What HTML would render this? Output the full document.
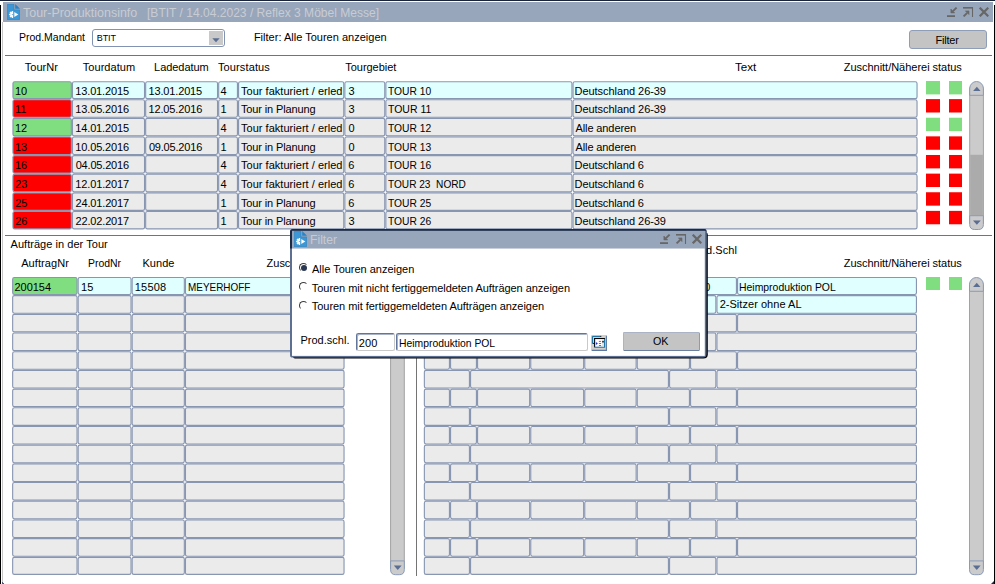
<!DOCTYPE html>
<html lang="de">
<head>
<meta charset="utf-8">
<title>Tour-Produktionsinfo</title>
<style>
html,body{margin:0;padding:0;}
body{width:995px;height:584px;overflow:hidden;background:#fff;position:relative;font-family:"Liberation Sans",Arial,sans-serif;font-size:11px;color:#000;}
.t{position:absolute;white-space:nowrap;display:block;transform-origin:0 0;}
.ic{position:absolute;display:block;}
#win{position:absolute;left:0;top:0;width:995px;height:584px;overflow:hidden;}
#frame-top{position:absolute;left:0;top:0;width:995px;height:1px;background:#18233a;}
#frame-left{position:absolute;left:0;top:5px;width:1px;height:579px;background:#000;}
#frame-left2{position:absolute;left:2px;top:22px;width:1px;height:562px;background:#c6c6c6;}
#frame-right{position:absolute;left:994px;top:5px;width:1px;height:579px;background:#000;}
#frame-br{position:absolute;left:991px;top:581px;width:3px;height:3px;background:linear-gradient(135deg,rgba(0,0,0,0) 45%,#1b2a45 55%);}
#frame-bl{position:absolute;left:2px;top:581px;width:3px;height:3px;background:linear-gradient(225deg,rgba(0,0,0,0) 50%,#4a5a78 60%);}
#titlebar{position:absolute;left:3px;top:2px;width:990px;height:19.5px;background:#98a6bb;}
#grid{position:absolute;left:0;top:0;}

.combo{position:absolute;left:92px;top:29px;width:132.5px;height:17.5px;box-sizing:border-box;border:1px solid #8293b2;border-radius:3px;background:#fff;}
.combo .btn{position:absolute;right:1px;top:0.7px;width:13.2px;height:14.2px;background:#c9c9c9;}
.pbtn{position:absolute;box-sizing:border-box;background:#c4c4c4;border:1px solid #8e9db8;border-radius:3px;}
#dlg{position:absolute;left:290.0px;top:229.0px;width:717.8px;height:129.6px;}
#dlg{width:417.8px;}
#dlg .body{position:absolute;left:0;top:0;right:1.2px;bottom:1.2px;background:#fff;box-sizing:border-box;border:2px solid #5d7092;border-top:1.6px solid #1b2a45;border-radius:3px 3px 4px 3px;}
#dlg .shadow{position:absolute;left:2px;top:3px;right:0;bottom:0;background:#000;border-radius:0 3px 5px 3px;}
#dlg .tb{position:absolute;left:2px;top:1.6px;right:3.2px;height:17.8px;background:#98a6bb;}
#dlg .tbl{position:absolute;left:0;top:1px;width:2px;height:18.4px;background:#1b2a45;}
.lookup{position:absolute;width:16px;height:16px;}
.inp{position:absolute;box-sizing:border-box;border:1px solid #c9c9c9;border-top:1.5px solid #62759a;border-left:1.5px solid #62759a;border-radius:2.5px;background:#fff;box-shadow:inset 1px 1px 0 rgba(98,117,154,0.55);}
.radio{position:absolute;width:9px;height:9px;border-radius:50%;box-sizing:border-box;border:1.2px solid transparent;border-top-color:#3c3c3c;border-left-color:#3c3c3c;transform:rotate(0deg);}
.radio.on:after{content:"";position:absolute;left:1px;top:1.1px;width:6.2px;height:6.2px;border-radius:50%;background:#2a3853;}
</style>
</head>
<body>
<div id="win">
<svg id="grid" width="995" height="584" viewBox="0 0 995 584">
<g stroke="#8896b2" stroke-width="1.12"><rect x="12.96" y="81.76" width="58.38" height="16.88" rx="1.7" fill="#80de80"/><rect x="72.46" y="81.76" width="72.08" height="16.88" rx="1.7" fill="#e0ffff"/><rect x="145.66" y="81.76" width="71.88" height="16.88" rx="1.7" fill="#e0ffff"/><rect x="218.66" y="81.76" width="18.78" height="16.88" rx="1.7" fill="#e0ffff"/><rect x="238.56" y="81.76" width="105.18" height="16.88" rx="1.7" fill="#e0ffff"/><rect x="344.86" y="81.76" width="39.88" height="16.88" rx="1.7" fill="#e0ffff"/><rect x="385.86" y="81.76" width="186.08" height="16.88" rx="1.7" fill="#e0ffff"/><rect x="573.06" y="81.76" width="343.98" height="16.88" rx="1.7" fill="#e0ffff"/><rect x="12.96" y="99.76" width="58.38" height="17.51" rx="1.7" fill="#ff0000"/><rect x="72.46" y="99.76" width="72.08" height="17.51" rx="1.7" fill="#ebebeb"/><rect x="145.66" y="99.76" width="71.88" height="17.51" rx="1.7" fill="#ebebeb"/><rect x="218.66" y="99.76" width="18.78" height="17.51" rx="1.7" fill="#ebebeb"/><rect x="238.56" y="99.76" width="105.18" height="17.51" rx="1.7" fill="#ebebeb"/><rect x="344.86" y="99.76" width="39.88" height="17.51" rx="1.7" fill="#ebebeb"/><rect x="385.86" y="99.76" width="186.08" height="17.51" rx="1.7" fill="#ebebeb"/><rect x="573.06" y="99.76" width="343.98" height="17.51" rx="1.7" fill="#ebebeb"/><rect x="12.96" y="118.39" width="58.38" height="17.51" rx="1.7" fill="#80de80"/><rect x="72.46" y="118.39" width="72.08" height="17.51" rx="1.7" fill="#ebebeb"/><rect x="145.66" y="118.39" width="71.88" height="17.51" rx="1.7" fill="#ebebeb"/><rect x="218.66" y="118.39" width="18.78" height="17.51" rx="1.7" fill="#ebebeb"/><rect x="238.56" y="118.39" width="105.18" height="17.51" rx="1.7" fill="#ebebeb"/><rect x="344.86" y="118.39" width="39.88" height="17.51" rx="1.7" fill="#ebebeb"/><rect x="385.86" y="118.39" width="186.08" height="17.51" rx="1.7" fill="#ebebeb"/><rect x="573.06" y="118.39" width="343.98" height="17.51" rx="1.7" fill="#ebebeb"/><rect x="12.96" y="137.02" width="58.38" height="17.51" rx="1.7" fill="#ff0000"/><rect x="72.46" y="137.02" width="72.08" height="17.51" rx="1.7" fill="#ebebeb"/><rect x="145.66" y="137.02" width="71.88" height="17.51" rx="1.7" fill="#ebebeb"/><rect x="218.66" y="137.02" width="18.78" height="17.51" rx="1.7" fill="#ebebeb"/><rect x="238.56" y="137.02" width="105.18" height="17.51" rx="1.7" fill="#ebebeb"/><rect x="344.86" y="137.02" width="39.88" height="17.51" rx="1.7" fill="#ebebeb"/><rect x="385.86" y="137.02" width="186.08" height="17.51" rx="1.7" fill="#ebebeb"/><rect x="573.06" y="137.02" width="343.98" height="17.51" rx="1.7" fill="#ebebeb"/><rect x="12.96" y="155.65" width="58.38" height="17.51" rx="1.7" fill="#ff0000"/><rect x="72.46" y="155.65" width="72.08" height="17.51" rx="1.7" fill="#ebebeb"/><rect x="145.66" y="155.65" width="71.88" height="17.51" rx="1.7" fill="#ebebeb"/><rect x="218.66" y="155.65" width="18.78" height="17.51" rx="1.7" fill="#ebebeb"/><rect x="238.56" y="155.65" width="105.18" height="17.51" rx="1.7" fill="#ebebeb"/><rect x="344.86" y="155.65" width="39.88" height="17.51" rx="1.7" fill="#ebebeb"/><rect x="385.86" y="155.65" width="186.08" height="17.51" rx="1.7" fill="#ebebeb"/><rect x="573.06" y="155.65" width="343.98" height="17.51" rx="1.7" fill="#ebebeb"/><rect x="12.96" y="174.28" width="58.38" height="17.51" rx="1.7" fill="#ff0000"/><rect x="72.46" y="174.28" width="72.08" height="17.51" rx="1.7" fill="#ebebeb"/><rect x="145.66" y="174.28" width="71.88" height="17.51" rx="1.7" fill="#ebebeb"/><rect x="218.66" y="174.28" width="18.78" height="17.51" rx="1.7" fill="#ebebeb"/><rect x="238.56" y="174.28" width="105.18" height="17.51" rx="1.7" fill="#ebebeb"/><rect x="344.86" y="174.28" width="39.88" height="17.51" rx="1.7" fill="#ebebeb"/><rect x="385.86" y="174.28" width="186.08" height="17.51" rx="1.7" fill="#ebebeb"/><rect x="573.06" y="174.28" width="343.98" height="17.51" rx="1.7" fill="#ebebeb"/><rect x="12.96" y="192.91" width="58.38" height="17.51" rx="1.7" fill="#ff0000"/><rect x="72.46" y="192.91" width="72.08" height="17.51" rx="1.7" fill="#ebebeb"/><rect x="145.66" y="192.91" width="71.88" height="17.51" rx="1.7" fill="#ebebeb"/><rect x="218.66" y="192.91" width="18.78" height="17.51" rx="1.7" fill="#ebebeb"/><rect x="238.56" y="192.91" width="105.18" height="17.51" rx="1.7" fill="#ebebeb"/><rect x="344.86" y="192.91" width="39.88" height="17.51" rx="1.7" fill="#ebebeb"/><rect x="385.86" y="192.91" width="186.08" height="17.51" rx="1.7" fill="#ebebeb"/><rect x="573.06" y="192.91" width="343.98" height="17.51" rx="1.7" fill="#ebebeb"/><rect x="12.96" y="211.54" width="58.38" height="17.35" rx="1.7" fill="#ff0000"/><rect x="72.46" y="211.54" width="72.08" height="17.35" rx="1.7" fill="#ebebeb"/><rect x="145.66" y="211.54" width="71.88" height="17.35" rx="1.7" fill="#ebebeb"/><rect x="218.66" y="211.54" width="18.78" height="17.35" rx="1.7" fill="#ebebeb"/><rect x="238.56" y="211.54" width="105.18" height="17.35" rx="1.7" fill="#ebebeb"/><rect x="344.86" y="211.54" width="39.88" height="17.35" rx="1.7" fill="#ebebeb"/><rect x="385.86" y="211.54" width="186.08" height="17.35" rx="1.7" fill="#ebebeb"/><rect x="573.06" y="211.54" width="343.98" height="17.35" rx="1.7" fill="#ebebeb"/></g>
<g stroke="#8896b2" stroke-width="1.12"><rect x="12.66" y="277.46" width="64.38" height="17.08" rx="1.7" fill="#80de80"/><rect x="78.16" y="277.46" width="52.88" height="17.08" rx="1.7" fill="#e0ffff"/><rect x="132.16" y="277.46" width="52.18" height="17.08" rx="1.7" fill="#e0ffff"/><rect x="185.46" y="277.46" width="158.58" height="17.08" rx="1.7" fill="#e0ffff"/><rect x="12.66" y="295.66" width="64.38" height="17.57" rx="1.7" fill="#ebebeb"/><rect x="78.16" y="295.66" width="52.88" height="17.57" rx="1.7" fill="#ebebeb"/><rect x="132.16" y="295.66" width="52.18" height="17.57" rx="1.7" fill="#ebebeb"/><rect x="185.46" y="295.66" width="158.58" height="17.57" rx="1.7" fill="#ebebeb"/><rect x="12.66" y="314.35" width="64.38" height="17.57" rx="1.7" fill="#ebebeb"/><rect x="78.16" y="314.35" width="52.88" height="17.57" rx="1.7" fill="#ebebeb"/><rect x="132.16" y="314.35" width="52.18" height="17.57" rx="1.7" fill="#ebebeb"/><rect x="185.46" y="314.35" width="158.58" height="17.57" rx="1.7" fill="#ebebeb"/><rect x="12.66" y="333.04" width="64.38" height="17.57" rx="1.7" fill="#ebebeb"/><rect x="78.16" y="333.04" width="52.88" height="17.57" rx="1.7" fill="#ebebeb"/><rect x="132.16" y="333.04" width="52.18" height="17.57" rx="1.7" fill="#ebebeb"/><rect x="185.46" y="333.04" width="158.58" height="17.57" rx="1.7" fill="#ebebeb"/><rect x="12.66" y="351.73" width="64.38" height="17.57" rx="1.7" fill="#ebebeb"/><rect x="78.16" y="351.73" width="52.88" height="17.57" rx="1.7" fill="#ebebeb"/><rect x="132.16" y="351.73" width="52.18" height="17.57" rx="1.7" fill="#ebebeb"/><rect x="185.46" y="351.73" width="158.58" height="17.57" rx="1.7" fill="#ebebeb"/><rect x="12.66" y="370.42" width="64.38" height="17.57" rx="1.7" fill="#ebebeb"/><rect x="78.16" y="370.42" width="52.88" height="17.57" rx="1.7" fill="#ebebeb"/><rect x="132.16" y="370.42" width="52.18" height="17.57" rx="1.7" fill="#ebebeb"/><rect x="185.46" y="370.42" width="158.58" height="17.57" rx="1.7" fill="#ebebeb"/><rect x="12.66" y="389.11" width="64.38" height="17.57" rx="1.7" fill="#ebebeb"/><rect x="78.16" y="389.11" width="52.88" height="17.57" rx="1.7" fill="#ebebeb"/><rect x="132.16" y="389.11" width="52.18" height="17.57" rx="1.7" fill="#ebebeb"/><rect x="185.46" y="389.11" width="158.58" height="17.57" rx="1.7" fill="#ebebeb"/><rect x="12.66" y="407.80" width="64.38" height="17.57" rx="1.7" fill="#ebebeb"/><rect x="78.16" y="407.80" width="52.88" height="17.57" rx="1.7" fill="#ebebeb"/><rect x="132.16" y="407.80" width="52.18" height="17.57" rx="1.7" fill="#ebebeb"/><rect x="185.46" y="407.80" width="158.58" height="17.57" rx="1.7" fill="#ebebeb"/><rect x="12.66" y="426.49" width="64.38" height="17.57" rx="1.7" fill="#ebebeb"/><rect x="78.16" y="426.49" width="52.88" height="17.57" rx="1.7" fill="#ebebeb"/><rect x="132.16" y="426.49" width="52.18" height="17.57" rx="1.7" fill="#ebebeb"/><rect x="185.46" y="426.49" width="158.58" height="17.57" rx="1.7" fill="#ebebeb"/><rect x="12.66" y="445.18" width="64.38" height="17.57" rx="1.7" fill="#ebebeb"/><rect x="78.16" y="445.18" width="52.88" height="17.57" rx="1.7" fill="#ebebeb"/><rect x="132.16" y="445.18" width="52.18" height="17.57" rx="1.7" fill="#ebebeb"/><rect x="185.46" y="445.18" width="158.58" height="17.57" rx="1.7" fill="#ebebeb"/><rect x="12.66" y="463.87" width="64.38" height="17.57" rx="1.7" fill="#ebebeb"/><rect x="78.16" y="463.87" width="52.88" height="17.57" rx="1.7" fill="#ebebeb"/><rect x="132.16" y="463.87" width="52.18" height="17.57" rx="1.7" fill="#ebebeb"/><rect x="185.46" y="463.87" width="158.58" height="17.57" rx="1.7" fill="#ebebeb"/><rect x="12.66" y="482.56" width="64.38" height="17.57" rx="1.7" fill="#ebebeb"/><rect x="78.16" y="482.56" width="52.88" height="17.57" rx="1.7" fill="#ebebeb"/><rect x="132.16" y="482.56" width="52.18" height="17.57" rx="1.7" fill="#ebebeb"/><rect x="185.46" y="482.56" width="158.58" height="17.57" rx="1.7" fill="#ebebeb"/><rect x="12.66" y="501.25" width="64.38" height="17.57" rx="1.7" fill="#ebebeb"/><rect x="78.16" y="501.25" width="52.88" height="17.57" rx="1.7" fill="#ebebeb"/><rect x="132.16" y="501.25" width="52.18" height="17.57" rx="1.7" fill="#ebebeb"/><rect x="185.46" y="501.25" width="158.58" height="17.57" rx="1.7" fill="#ebebeb"/><rect x="12.66" y="519.94" width="64.38" height="17.57" rx="1.7" fill="#ebebeb"/><rect x="78.16" y="519.94" width="52.88" height="17.57" rx="1.7" fill="#ebebeb"/><rect x="132.16" y="519.94" width="52.18" height="17.57" rx="1.7" fill="#ebebeb"/><rect x="185.46" y="519.94" width="158.58" height="17.57" rx="1.7" fill="#ebebeb"/><rect x="12.66" y="538.63" width="64.38" height="17.57" rx="1.7" fill="#ebebeb"/><rect x="78.16" y="538.63" width="52.88" height="17.57" rx="1.7" fill="#ebebeb"/><rect x="132.16" y="538.63" width="52.18" height="17.57" rx="1.7" fill="#ebebeb"/><rect x="185.46" y="538.63" width="158.58" height="17.57" rx="1.7" fill="#ebebeb"/><rect x="12.66" y="557.32" width="64.38" height="17.02" rx="1.7" fill="#ebebeb"/><rect x="78.16" y="557.32" width="52.88" height="17.02" rx="1.7" fill="#ebebeb"/><rect x="132.16" y="557.32" width="52.18" height="17.02" rx="1.7" fill="#ebebeb"/><rect x="185.46" y="557.32" width="158.58" height="17.02" rx="1.7" fill="#ebebeb"/></g>
<g stroke="#8896b2" stroke-width="1.12"><rect x="424.36" y="277.46" width="25.08" height="17.08" rx="1.7" fill="#e0ffff"/><rect x="450.56" y="277.46" width="25.88" height="17.08" rx="1.7" fill="#e0ffff"/><rect x="477.56" y="277.46" width="52.08" height="17.08" rx="1.7" fill="#e0ffff"/><rect x="530.76" y="277.46" width="52.88" height="17.08" rx="1.7" fill="#e0ffff"/><rect x="584.76" y="277.46" width="51.38" height="17.08" rx="1.7" fill="#e0ffff"/><rect x="637.26" y="277.46" width="52.18" height="17.08" rx="1.7" fill="#e0ffff"/><rect x="690.56" y="277.46" width="45.88" height="17.08" rx="1.7" fill="#e0ffff"/><rect x="737.56" y="277.46" width="178.88" height="17.08" rx="1.7" fill="#e0ffff"/><rect x="424.36" y="295.66" width="45.08" height="17.57" rx="1.7" fill="#e0ffff"/><rect x="470.56" y="295.66" width="197.88" height="17.57" rx="1.7" fill="#e0ffff"/><rect x="669.56" y="295.66" width="46.28" height="17.57" rx="1.7" fill="#e0ffff"/><rect x="716.96" y="295.66" width="199.48" height="17.57" rx="1.7" fill="#e0ffff"/><rect x="424.36" y="314.35" width="25.08" height="17.57" rx="1.7" fill="#ebebeb"/><rect x="450.56" y="314.35" width="25.88" height="17.57" rx="1.7" fill="#ebebeb"/><rect x="477.56" y="314.35" width="52.08" height="17.57" rx="1.7" fill="#ebebeb"/><rect x="530.76" y="314.35" width="52.88" height="17.57" rx="1.7" fill="#ebebeb"/><rect x="584.76" y="314.35" width="51.38" height="17.57" rx="1.7" fill="#ebebeb"/><rect x="637.26" y="314.35" width="52.18" height="17.57" rx="1.7" fill="#ebebeb"/><rect x="690.56" y="314.35" width="45.88" height="17.57" rx="1.7" fill="#ebebeb"/><rect x="737.56" y="314.35" width="178.88" height="17.57" rx="1.7" fill="#ebebeb"/><rect x="424.36" y="333.04" width="45.08" height="17.57" rx="1.7" fill="#ebebeb"/><rect x="470.56" y="333.04" width="197.88" height="17.57" rx="1.7" fill="#ebebeb"/><rect x="669.56" y="333.04" width="46.28" height="17.57" rx="1.7" fill="#ebebeb"/><rect x="716.96" y="333.04" width="199.48" height="17.57" rx="1.7" fill="#ebebeb"/><rect x="424.36" y="351.73" width="25.08" height="17.57" rx="1.7" fill="#ebebeb"/><rect x="450.56" y="351.73" width="25.88" height="17.57" rx="1.7" fill="#ebebeb"/><rect x="477.56" y="351.73" width="52.08" height="17.57" rx="1.7" fill="#ebebeb"/><rect x="530.76" y="351.73" width="52.88" height="17.57" rx="1.7" fill="#ebebeb"/><rect x="584.76" y="351.73" width="51.38" height="17.57" rx="1.7" fill="#ebebeb"/><rect x="637.26" y="351.73" width="52.18" height="17.57" rx="1.7" fill="#ebebeb"/><rect x="690.56" y="351.73" width="45.88" height="17.57" rx="1.7" fill="#ebebeb"/><rect x="737.56" y="351.73" width="178.88" height="17.57" rx="1.7" fill="#ebebeb"/><rect x="424.36" y="370.42" width="45.08" height="17.57" rx="1.7" fill="#ebebeb"/><rect x="470.56" y="370.42" width="197.88" height="17.57" rx="1.7" fill="#ebebeb"/><rect x="669.56" y="370.42" width="46.28" height="17.57" rx="1.7" fill="#ebebeb"/><rect x="716.96" y="370.42" width="199.48" height="17.57" rx="1.7" fill="#ebebeb"/><rect x="424.36" y="389.11" width="25.08" height="17.57" rx="1.7" fill="#ebebeb"/><rect x="450.56" y="389.11" width="25.88" height="17.57" rx="1.7" fill="#ebebeb"/><rect x="477.56" y="389.11" width="52.08" height="17.57" rx="1.7" fill="#ebebeb"/><rect x="530.76" y="389.11" width="52.88" height="17.57" rx="1.7" fill="#ebebeb"/><rect x="584.76" y="389.11" width="51.38" height="17.57" rx="1.7" fill="#ebebeb"/><rect x="637.26" y="389.11" width="52.18" height="17.57" rx="1.7" fill="#ebebeb"/><rect x="690.56" y="389.11" width="45.88" height="17.57" rx="1.7" fill="#ebebeb"/><rect x="737.56" y="389.11" width="178.88" height="17.57" rx="1.7" fill="#ebebeb"/><rect x="424.36" y="407.80" width="45.08" height="17.57" rx="1.7" fill="#ebebeb"/><rect x="470.56" y="407.80" width="197.88" height="17.57" rx="1.7" fill="#ebebeb"/><rect x="669.56" y="407.80" width="46.28" height="17.57" rx="1.7" fill="#ebebeb"/><rect x="716.96" y="407.80" width="199.48" height="17.57" rx="1.7" fill="#ebebeb"/><rect x="424.36" y="426.49" width="25.08" height="17.57" rx="1.7" fill="#ebebeb"/><rect x="450.56" y="426.49" width="25.88" height="17.57" rx="1.7" fill="#ebebeb"/><rect x="477.56" y="426.49" width="52.08" height="17.57" rx="1.7" fill="#ebebeb"/><rect x="530.76" y="426.49" width="52.88" height="17.57" rx="1.7" fill="#ebebeb"/><rect x="584.76" y="426.49" width="51.38" height="17.57" rx="1.7" fill="#ebebeb"/><rect x="637.26" y="426.49" width="52.18" height="17.57" rx="1.7" fill="#ebebeb"/><rect x="690.56" y="426.49" width="45.88" height="17.57" rx="1.7" fill="#ebebeb"/><rect x="737.56" y="426.49" width="178.88" height="17.57" rx="1.7" fill="#ebebeb"/><rect x="424.36" y="445.18" width="45.08" height="17.57" rx="1.7" fill="#ebebeb"/><rect x="470.56" y="445.18" width="197.88" height="17.57" rx="1.7" fill="#ebebeb"/><rect x="669.56" y="445.18" width="46.28" height="17.57" rx="1.7" fill="#ebebeb"/><rect x="716.96" y="445.18" width="199.48" height="17.57" rx="1.7" fill="#ebebeb"/><rect x="424.36" y="463.87" width="25.08" height="17.57" rx="1.7" fill="#ebebeb"/><rect x="450.56" y="463.87" width="25.88" height="17.57" rx="1.7" fill="#ebebeb"/><rect x="477.56" y="463.87" width="52.08" height="17.57" rx="1.7" fill="#ebebeb"/><rect x="530.76" y="463.87" width="52.88" height="17.57" rx="1.7" fill="#ebebeb"/><rect x="584.76" y="463.87" width="51.38" height="17.57" rx="1.7" fill="#ebebeb"/><rect x="637.26" y="463.87" width="52.18" height="17.57" rx="1.7" fill="#ebebeb"/><rect x="690.56" y="463.87" width="45.88" height="17.57" rx="1.7" fill="#ebebeb"/><rect x="737.56" y="463.87" width="178.88" height="17.57" rx="1.7" fill="#ebebeb"/><rect x="424.36" y="482.56" width="45.08" height="17.57" rx="1.7" fill="#ebebeb"/><rect x="470.56" y="482.56" width="197.88" height="17.57" rx="1.7" fill="#ebebeb"/><rect x="669.56" y="482.56" width="46.28" height="17.57" rx="1.7" fill="#ebebeb"/><rect x="716.96" y="482.56" width="199.48" height="17.57" rx="1.7" fill="#ebebeb"/><rect x="424.36" y="501.25" width="25.08" height="17.57" rx="1.7" fill="#ebebeb"/><rect x="450.56" y="501.25" width="25.88" height="17.57" rx="1.7" fill="#ebebeb"/><rect x="477.56" y="501.25" width="52.08" height="17.57" rx="1.7" fill="#ebebeb"/><rect x="530.76" y="501.25" width="52.88" height="17.57" rx="1.7" fill="#ebebeb"/><rect x="584.76" y="501.25" width="51.38" height="17.57" rx="1.7" fill="#ebebeb"/><rect x="637.26" y="501.25" width="52.18" height="17.57" rx="1.7" fill="#ebebeb"/><rect x="690.56" y="501.25" width="45.88" height="17.57" rx="1.7" fill="#ebebeb"/><rect x="737.56" y="501.25" width="178.88" height="17.57" rx="1.7" fill="#ebebeb"/><rect x="424.36" y="519.94" width="45.08" height="17.57" rx="1.7" fill="#ebebeb"/><rect x="470.56" y="519.94" width="197.88" height="17.57" rx="1.7" fill="#ebebeb"/><rect x="669.56" y="519.94" width="46.28" height="17.57" rx="1.7" fill="#ebebeb"/><rect x="716.96" y="519.94" width="199.48" height="17.57" rx="1.7" fill="#ebebeb"/><rect x="424.36" y="538.63" width="25.08" height="17.57" rx="1.7" fill="#ebebeb"/><rect x="450.56" y="538.63" width="25.88" height="17.57" rx="1.7" fill="#ebebeb"/><rect x="477.56" y="538.63" width="52.08" height="17.57" rx="1.7" fill="#ebebeb"/><rect x="530.76" y="538.63" width="52.88" height="17.57" rx="1.7" fill="#ebebeb"/><rect x="584.76" y="538.63" width="51.38" height="17.57" rx="1.7" fill="#ebebeb"/><rect x="637.26" y="538.63" width="52.18" height="17.57" rx="1.7" fill="#ebebeb"/><rect x="690.56" y="538.63" width="45.88" height="17.57" rx="1.7" fill="#ebebeb"/><rect x="737.56" y="538.63" width="178.88" height="17.57" rx="1.7" fill="#ebebeb"/><rect x="424.36" y="557.32" width="45.08" height="17.02" rx="1.7" fill="#ebebeb"/><rect x="470.56" y="557.32" width="197.88" height="17.02" rx="1.7" fill="#ebebeb"/><rect x="669.56" y="557.32" width="46.28" height="17.02" rx="1.7" fill="#ebebeb"/><rect x="716.96" y="557.32" width="199.48" height="17.02" rx="1.7" fill="#ebebeb"/></g>
<rect x="926.00" y="81.00" width="14" height="13.4" fill="#80de80" stroke="none"/>
<rect x="949.00" y="81.00" width="13" height="13.4" fill="#80de80" stroke="none"/>
<rect x="926.00" y="99.10" width="14" height="13.4" fill="#ff0000" stroke="none"/>
<rect x="949.00" y="99.10" width="13" height="13.4" fill="#ff0000" stroke="none"/>
<rect x="926.00" y="117.73" width="14" height="13.4" fill="#80de80" stroke="none"/>
<rect x="949.00" y="117.73" width="13" height="13.4" fill="#80de80" stroke="none"/>
<rect x="926.00" y="136.36" width="14" height="13.4" fill="#ff0000" stroke="none"/>
<rect x="949.00" y="136.36" width="13" height="13.4" fill="#ff0000" stroke="none"/>
<rect x="926.00" y="154.99" width="14" height="13.4" fill="#ff0000" stroke="none"/>
<rect x="949.00" y="154.99" width="13" height="13.4" fill="#ff0000" stroke="none"/>
<rect x="926.00" y="173.62" width="14" height="13.4" fill="#ff0000" stroke="none"/>
<rect x="949.00" y="173.62" width="13" height="13.4" fill="#ff0000" stroke="none"/>
<rect x="926.00" y="192.25" width="14" height="13.4" fill="#ff0000" stroke="none"/>
<rect x="949.00" y="192.25" width="13" height="13.4" fill="#ff0000" stroke="none"/>
<rect x="926.00" y="210.88" width="14" height="13.4" fill="#ff0000" stroke="none"/>
<rect x="949.00" y="210.88" width="13" height="13.4" fill="#ff0000" stroke="none"/>
<rect x="926.00" y="277.00" width="14" height="13" fill="#80de80" stroke="none"/>
<rect x="949.00" y="277.00" width="13" height="13" fill="#80de80" stroke="none"/>
<rect x="353.50" y="277.00" width="14" height="13" fill="#80de80" stroke="none"/>
<rect x="376.50" y="277.00" width="13" height="13" fill="#80de80" stroke="none"/>
<rect x="969.70" y="88.00" width="13.70" height="135.00" fill="#cbcbcb" stroke="#a2a2a2" stroke-width="1"/>
<rect x="970.20" y="154.80" width="12.70" height="60.90" fill="#ababab" stroke="none"/>
<path d="M969.70 95.30 V88.50 A6.85 7 0 0 1 983.40 88.50 V95.30 Z" fill="#cbcbcb" stroke="#8a9bb7" stroke-width="1"/>
<path d="M973.15 91.10 L976.85 86.70 L980.55 91.10 Z" fill="#5a6d92" stroke="none"/>
<path d="M969.70 215.70 V224.50 Q969.70 229.50 974.70 229.50 H978.40 Q983.40 229.50 983.40 224.50 V215.70 Z" fill="#cbcbcb" stroke="#8a9bb7" stroke-width="1"/>
<path d="M972.95 220.40 L976.85 224.70 L980.75 220.40 Z" fill="#5a6d92" stroke="none"/>
<rect x="969.50" y="284.00" width="13.90" height="284.20" fill="#cbcbcb" stroke="#a2a2a2" stroke-width="1"/>
<path d="M969.50 291.30 V284.50 A6.95 7 0 0 1 983.40 284.50 V291.30 Z" fill="#cbcbcb" stroke="#8a9bb7" stroke-width="1"/>
<path d="M973.05 287.10 L976.75 282.70 L980.45 287.10 Z" fill="#5a6d92" stroke="none"/>
<path d="M969.50 560.90 V569.70 Q969.50 574.70 974.50 574.70 H978.40 Q983.40 574.70 983.40 569.70 V560.90 Z" fill="#cbcbcb" stroke="#8a9bb7" stroke-width="1"/>
<path d="M972.85 565.60 L976.75 569.90 L980.65 565.60 Z" fill="#5a6d92" stroke="none"/>
<rect x="390.60" y="284.00" width="13.70" height="284.20" fill="#cbcbcb" stroke="#a2a2a2" stroke-width="1"/>
<path d="M390.60 291.30 V284.50 A6.85 7 0 0 1 404.30 284.50 V291.30 Z" fill="#cbcbcb" stroke="#8a9bb7" stroke-width="1"/>
<path d="M394.05 287.10 L397.75 282.70 L401.45 287.10 Z" fill="#5a6d92" stroke="none"/>
<path d="M390.60 560.90 V569.70 Q390.60 574.70 395.60 574.70 H399.30 Q404.30 574.70 404.30 569.70 V560.90 Z" fill="#cbcbcb" stroke="#8a9bb7" stroke-width="1"/>
<path d="M393.85 565.60 L397.75 569.90 L401.65 565.60 Z" fill="#5a6d92" stroke="none"/>
<rect x="5" y="55" width="987" height="1" fill="#747474" stroke="none"/>
<rect x="5" y="235" width="987" height="1" fill="#747474" stroke="none"/>
<rect x="416" y="236" width="1" height="340" fill="#747474" stroke="none"/>
</svg>
<div id="frame-top"></div><div id="frame-left"></div><div id="frame-left2"></div><div id="frame-right"></div><div id="frame-br"></div><div id="frame-bl"></div>
<div id="titlebar">
<div style="position:absolute;left:4px;top:2px"><svg class="ic" width="13" height="16" viewBox="0 0 13 16"><path d="M0.3 0.3H6.9V5.9H12.7V15.7H0.3Z" fill="#3b97d6" stroke="#2d82bf" stroke-width="0.6"/><path d="M8.2 0L13 4.8H8.2Z" fill="#2b82c4"/><path d="M6 7.8A2.7 2.7 0 0 0 6 13.2Z" fill="#fff" stroke="#fff" stroke-width="0.4"/><path d="M5.4 6.9V8M5.4 13V14.1M2.1 10.5H3.6M3 8L4.1 9.1M3 13L4.1 11.9" stroke="#fff" stroke-width="1.4" fill="none"/><circle cx="5.3" cy="10.5" r="0.55" fill="#3b97d6"/><path d="M7.3 7.9L11.3 10.5L7.3 13.1Z" fill="#fff"/></svg></div>
<span class="t" style="left:20.06px;top:1.90px;font-size:13px;line-height:17px;transform:scaleX(0.9582);color:#c8ccd3;">Tour-Produktionsinfo</span><span class="t" style="left:143.57px;top:1.90px;font-size:13px;line-height:17px;transform:scaleX(0.9264);color:#c8ccd3;">[BTIT / 14.04.2023 / Reflex 3 Möbel Messe]</span>
<svg class="ic" style="left:944px;top:5px" width="42" height="10" viewBox="0 0 42 10"><g fill="none" stroke="#676767" stroke-width="1.9"><path d="M0 9.1H8" stroke-width="1.8"/><path d="M9.6 0.6L6 4.2"/><path d="M3.9 2.1V5.9H7.7Z" fill="#676767" stroke-width="0.6"/><path d="M16 0.8H26" stroke-width="1.6"/><path d="M25.5 0V10" stroke-width="1.1"/><path d="M16.6 9.4L20.2 5.8"/><path d="M18.4 3.9H22V7.6Z" fill="#676767" stroke-width="0.6"/><path d="M32.7 0.7L41.3 9.3M41.3 0.7L32.7 9.3" stroke-width="2.2"/></g></svg>
</div>
<div class="combo"><span class="t" style="left:3.70px;top:1.78px;font-size:9px;line-height:12px;letter-spacing:-0.033px;">BTIT</span><div class="btn"><svg class="ic" style="left:0;top:0" width="14" height="15" viewBox="0 0 14 15"><path d="M3.3 7.3H10.7L7 11.2Z" fill="#5a6d92"/></svg></div></div>
<div class="pbtn" style="left:909px;top:30px;width:78px;height:19px;"><span class="t" style="left:25.40px;top:1.89px;font-size:11px;line-height:14px;letter-spacing:-0.180px;">Filter</span></div>
<span class="t" style="left:24.80px;top:60.19px;font-size:11px;line-height:14px;letter-spacing:0.030px;">TourNr</span>
<span class="t" style="left:82.80px;top:60.19px;font-size:11px;line-height:14px;letter-spacing:0.044px;">Tourdatum</span>
<span class="t" style="left:154.10px;top:60.19px;font-size:11px;line-height:14px;letter-spacing:-0.056px;">Ladedatum</span>
<span class="t" style="left:217.90px;top:60.19px;font-size:11px;line-height:14px;letter-spacing:0.133px;">Tourstatus</span>
<span class="t" style="left:345.30px;top:60.19px;font-size:11px;line-height:14px;letter-spacing:-0.044px;">Tourgebiet</span>
<span class="t" style="left:734.79px;top:60.19px;font-size:11px;line-height:14px;transform:scaleX(1.0553);">Text</span>
<span class="t" style="left:843.70px;top:60.19px;font-size:11px;line-height:14px;letter-spacing:-0.020px;">Zuschnitt/Näherei status</span>
<span class="t" style="left:14.90px;top:83.79px;font-size:11px;line-height:14px;">10</span>
<span class="t" style="left:75.30px;top:83.79px;font-size:11px;line-height:14px;letter-spacing:-0.150px;">13.01.2015</span>
<span class="t" style="left:148.50px;top:83.79px;font-size:11px;line-height:14px;letter-spacing:-0.150px;">13.01.2015</span>
<span class="t" style="left:220.55px;top:83.79px;font-size:11px;line-height:14px;">4</span>
<span class="t" style="left:241.00px;top:83.79px;font-size:11px;line-height:14px;letter-spacing:0.027px;width:102.3px;overflow:hidden;">Tour fakturiert / erled</span>
<span class="t" style="left:348.40px;top:83.79px;font-size:11px;line-height:14px;">3</span>
<span class="t" style="left:387.81px;top:83.79px;font-size:11px;line-height:14px;transform:scaleX(0.9332);">TOUR 10</span>
<span class="t" style="left:574.60px;top:83.79px;font-size:11px;line-height:14px;letter-spacing:-0.059px;">Deutschland 26-39</span>
<span class="t" style="left:14.90px;top:102.41px;font-size:11px;line-height:14px;">11</span>
<span class="t" style="left:75.30px;top:102.41px;font-size:11px;line-height:14px;letter-spacing:-0.144px;">13.05.2016</span>
<span class="t" style="left:148.50px;top:102.41px;font-size:11px;line-height:14px;letter-spacing:-0.144px;">12.05.2016</span>
<span class="t" style="left:220.40px;top:102.41px;font-size:11px;line-height:14px;">1</span>
<span class="t" style="left:241.00px;top:102.41px;font-size:11px;line-height:14px;letter-spacing:-0.136px;">Tour in Planung</span>
<span class="t" style="left:348.40px;top:102.41px;font-size:11px;line-height:14px;">3</span>
<span class="t" style="left:387.81px;top:102.41px;font-size:11px;line-height:14px;transform:scaleX(0.9530);">TOUR 11</span>
<span class="t" style="left:574.60px;top:102.41px;font-size:11px;line-height:14px;letter-spacing:-0.059px;">Deutschland 26-39</span>
<span class="t" style="left:14.90px;top:121.03px;font-size:11px;line-height:14px;">12</span>
<span class="t" style="left:75.30px;top:121.03px;font-size:11px;line-height:14px;letter-spacing:-0.150px;">14.01.2015</span>
<span class="t" style="left:220.55px;top:121.03px;font-size:11px;line-height:14px;">4</span>
<span class="t" style="left:241.00px;top:121.03px;font-size:11px;line-height:14px;letter-spacing:0.027px;width:102.3px;overflow:hidden;">Tour fakturiert / erled</span>
<span class="t" style="left:348.40px;top:121.03px;font-size:11px;line-height:14px;">0</span>
<span class="t" style="left:387.81px;top:121.03px;font-size:11px;line-height:14px;transform:scaleX(0.9352);">TOUR 12</span>
<span class="t" style="left:575.50px;top:121.03px;font-size:11px;line-height:14px;letter-spacing:-0.109px;">Alle anderen</span>
<span class="t" style="left:14.90px;top:139.65px;font-size:11px;line-height:14px;">13</span>
<span class="t" style="left:75.30px;top:139.65px;font-size:11px;line-height:14px;letter-spacing:-0.144px;">10.05.2016</span>
<span class="t" style="left:148.90px;top:139.65px;font-size:11px;line-height:14px;letter-spacing:-0.189px;">09.05.2016</span>
<span class="t" style="left:220.40px;top:139.65px;font-size:11px;line-height:14px;">1</span>
<span class="t" style="left:241.00px;top:139.65px;font-size:11px;line-height:14px;letter-spacing:-0.136px;">Tour in Planung</span>
<span class="t" style="left:348.40px;top:139.65px;font-size:11px;line-height:14px;">0</span>
<span class="t" style="left:387.81px;top:139.65px;font-size:11px;line-height:14px;transform:scaleX(0.9342);">TOUR 13</span>
<span class="t" style="left:575.50px;top:139.65px;font-size:11px;line-height:14px;letter-spacing:-0.109px;">Alle anderen</span>
<span class="t" style="left:14.90px;top:158.27px;font-size:11px;line-height:14px;">16</span>
<span class="t" style="left:75.70px;top:158.27px;font-size:11px;line-height:14px;letter-spacing:-0.189px;">04.05.2016</span>
<span class="t" style="left:220.55px;top:158.27px;font-size:11px;line-height:14px;">4</span>
<span class="t" style="left:241.00px;top:158.27px;font-size:11px;line-height:14px;letter-spacing:0.027px;width:102.3px;overflow:hidden;">Tour fakturiert / erled</span>
<span class="t" style="left:348.25px;top:158.27px;font-size:11px;line-height:14px;">6</span>
<span class="t" style="left:387.81px;top:158.27px;font-size:11px;line-height:14px;transform:scaleX(0.9342);">TOUR 16</span>
<span class="t" style="left:574.60px;top:158.27px;font-size:11px;line-height:14px;letter-spacing:-0.096px;">Deutschland 6</span>
<span class="t" style="left:15.15px;top:176.89px;font-size:11px;line-height:14px;">23</span>
<span class="t" style="left:75.30px;top:176.89px;font-size:11px;line-height:14px;letter-spacing:-0.139px;">12.01.2017</span>
<span class="t" style="left:220.55px;top:176.89px;font-size:11px;line-height:14px;">4</span>
<span class="t" style="left:241.00px;top:176.89px;font-size:11px;line-height:14px;letter-spacing:0.027px;width:102.3px;overflow:hidden;">Tour fakturiert / erled</span>
<span class="t" style="left:348.25px;top:176.89px;font-size:11px;line-height:14px;">6</span>
<span class="t" style="left:387.82px;top:176.89px;font-size:11px;line-height:14px;transform:scaleX(0.9185);">TOUR 23 &nbsp;NORD</span>
<span class="t" style="left:574.60px;top:176.89px;font-size:11px;line-height:14px;letter-spacing:-0.096px;">Deutschland 6</span>
<span class="t" style="left:15.15px;top:195.51px;font-size:11px;line-height:14px;">25</span>
<span class="t" style="left:75.55px;top:195.51px;font-size:11px;line-height:14px;letter-spacing:-0.167px;">24.01.2017</span>
<span class="t" style="left:220.40px;top:195.51px;font-size:11px;line-height:14px;">1</span>
<span class="t" style="left:241.00px;top:195.51px;font-size:11px;line-height:14px;letter-spacing:-0.136px;">Tour in Planung</span>
<span class="t" style="left:348.25px;top:195.51px;font-size:11px;line-height:14px;">6</span>
<span class="t" style="left:387.81px;top:195.51px;font-size:11px;line-height:14px;transform:scaleX(0.9332);">TOUR 25</span>
<span class="t" style="left:574.60px;top:195.51px;font-size:11px;line-height:14px;letter-spacing:-0.096px;">Deutschland 6</span>
<span class="t" style="left:15.15px;top:214.13px;font-size:11px;line-height:14px;">26</span>
<span class="t" style="left:75.55px;top:214.13px;font-size:11px;line-height:14px;letter-spacing:-0.167px;">22.02.2017</span>
<span class="t" style="left:220.40px;top:214.13px;font-size:11px;line-height:14px;">1</span>
<span class="t" style="left:241.00px;top:214.13px;font-size:11px;line-height:14px;letter-spacing:-0.136px;">Tour in Planung</span>
<span class="t" style="left:348.40px;top:214.13px;font-size:11px;line-height:14px;">3</span>
<span class="t" style="left:387.81px;top:214.13px;font-size:11px;line-height:14px;transform:scaleX(0.9342);">TOUR 26</span>
<span class="t" style="left:574.60px;top:214.13px;font-size:11px;line-height:14px;letter-spacing:-0.059px;">Deutschland 26-39</span>
<span class="t" style="left:10.50px;top:237.39px;font-size:11px;line-height:14px;letter-spacing:0.045px;">Aufträge in der Tour</span>
<span class="t" style="left:21.20px;top:255.99px;font-size:11px;line-height:14px;letter-spacing:0.075px;">AuftragNr</span>
<span class="t" style="left:87.65px;top:255.99px;font-size:11px;line-height:14px;transform:scaleX(0.9497);">ProdNr</span>
<span class="t" style="left:142.50px;top:255.99px;font-size:11px;line-height:14px;letter-spacing:0.037px;">Kunde</span>
<span class="t" style="left:266.60px;top:255.99px;font-size:11px;line-height:14px;letter-spacing:-0.020px;">Zuschnitt/Näherei status</span>
<span class="t" style="left:14.55px;top:279.59px;font-size:11px;line-height:14px;letter-spacing:-0.050px;">200154</span>
<span class="t" style="left:81.10px;top:279.59px;font-size:11px;line-height:14px;">15</span>
<span class="t" style="left:134.80px;top:279.59px;font-size:11px;line-height:14px;letter-spacing:0.200px;">15508</span>
<span class="t" style="left:187.59px;top:279.59px;font-size:11px;line-height:14px;transform:scaleX(0.9033);">MEYERHOFF</span>
<span class="t" style="left:688.60px;top:242.59px;font-size:11px;line-height:14px;letter-spacing:0.087px;">Prod.Schl</span>
<span class="t" style="left:843.70px;top:256.19px;font-size:11px;line-height:14px;letter-spacing:-0.020px;">Zuschnitt/Näherei status</span>
<span class="t" style="left:692.98px;top:279.59px;font-size:11px;line-height:14px;transform:scaleX(0.9483);">200</span>
<span class="t" style="left:739.25px;top:279.59px;font-size:11px;line-height:14px;transform:scaleX(0.9475);">Heimproduktion POL</span>
<span class="t" style="left:719.65px;top:297.39px;font-size:11px;line-height:14px;letter-spacing:0.037px;">2-Sitzer ohne AL</span>
<span class="t" style="left:18.74px;top:30.19px;font-size:11px;line-height:14px;transform:scaleX(0.9552);">Prod.Mandant</span>
<span class="t" style="left:253.90px;top:30.39px;font-size:11px;line-height:14px;letter-spacing:0.009px;">Filter: Alle Touren anzeigen</span>
<div id="dlg">
<svg class="ic" style="left:0;top:0" width="418" height="130" viewBox="0 0 418 130">
<path d="M3 3H414.8Q417.8 3 417.8 6V125.2Q417.8 129.6 413.4 129.6H5Q3 129.6 3 127.6Z" fill="#000"/>
<path d="M0 3Q0 0.1 3 0.1H414.5Q416.5 0.1 416.5 2V125Q416.5 128.6 413 128.6H2.5Q0 128.6 0 126Z" fill="#5d7092"/>
<path d="M0 19.4V3Q0 0.1 3 0.1H414.5Q416.5 0.1 416.5 2V3H2V19.4Z" fill="#1b2a45"/>
<path d="M414.9 1.8H416.5V19.4H414.9Z" fill="#5d7092"/>
<rect x="2" y="1.8" width="413" height="17.6" fill="#98a6bb"/>
<rect x="2" y="19.4" width="412.8" height="107.5" fill="#fff"/>
</svg>
<div style="position:absolute;left:4px;top:2px"><svg class="ic" width="13" height="16" viewBox="0 0 13 16"><path d="M0.3 0.3H6.9V5.9H12.7V15.7H0.3Z" fill="#3b97d6" stroke="#2d82bf" stroke-width="0.6"/><path d="M8.2 0L13 4.8H8.2Z" fill="#2b82c4"/><path d="M6 7.8A2.7 2.7 0 0 0 6 13.2Z" fill="#fff" stroke="#fff" stroke-width="0.4"/><path d="M5.4 6.9V8M5.4 13V14.1M2.1 10.5H3.6M3 8L4.1 9.1M3 13L4.1 11.9" stroke="#fff" stroke-width="1.4" fill="none"/><circle cx="5.3" cy="10.5" r="0.55" fill="#3b97d6"/><path d="M7.3 7.9L11.3 10.5L7.3 13.1Z" fill="#fff"/></svg></div>
<svg class="ic" style="left:370.1px;top:5.0px" width="42" height="10" viewBox="0 0 42 10"><g fill="none" stroke="#676767" stroke-width="1.9"><path d="M0 9.1H8" stroke-width="1.8"/><path d="M9.6 0.6L6 4.2"/><path d="M3.9 2.1V5.9H7.7Z" fill="#676767" stroke-width="0.6"/><path d="M16 0.8H26" stroke-width="1.6"/><path d="M25.5 0V10" stroke-width="1.1"/><path d="M16.6 9.4L20.2 5.8"/><path d="M18.4 3.9H22V7.6Z" fill="#676767" stroke-width="0.6"/><path d="M32.7 0.7L41.3 9.3M41.3 0.7L32.7 9.3" stroke-width="2.2"/></g></svg>
<div class="radio on" style="left:8.7px;top:33.8px"></div>
<div class="radio" style="left:8.7px;top:52.7px"></div>
<div class="radio" style="left:8.7px;top:71.7px"></div>
<div class="inp" style="left:66.3px;top:104.2px;width:38.3px;height:17.6px"></div>
<div class="inp" style="left:106.1px;top:104.2px;width:191.5px;height:17.6px"></div>
<div class="lookup" style="left:301.1px;top:106.1px;"><svg class="ic" style="left:0;top:0" width="16" height="16" viewBox="0 0 16 16"><rect x="0" y="0" width="16" height="16" rx="1.2" fill="#d3d0cc"/><path d="M15.4 0.8V15.4H0.8" fill="none" stroke="#5a78a2" stroke-width="1.1"/><path d="M1.4 8.6V1.4H9.4" fill="none" stroke="#0a6a9e" stroke-width="1"/><rect x="9.2" y="0.9" width="1.1" height="0.9" fill="#000"/><rect x="3.6" y="3.6" width="10" height="8.6" fill="#fff" stroke="#0a6a9e" stroke-width="1"/><path d="M3.1 3.5H13.9" stroke="#000" stroke-width="1"/><path d="M3.6 3V11.8M1.8 8.4H3.6" stroke="#000" stroke-width="0.9"/><path d="M4.9 6.9L6.9 8.5L4.9 10.1Z" fill="#1a2af0"/><path d="M7.9 6.4H10.1M7.9 8.5H10.1M7.9 10.5H10.1" stroke="#f01818" stroke-width="0.85"/><rect x="11.3" y="4.4" width="1.4" height="7.2" fill="#d8d8d8"/><rect x="11.3" y="5.9" width="1.4" height="1.6" fill="#000"/></svg></div>
<div class="pbtn" style="left:333.2px;top:103.0px;width:76.5px;height:18.8px;border-radius:1.5px;border-color:#aab4c6 #8c9ab4 #6d7f9f #aab4c6;"></div>
<span class="t" style="left:20.02px;top:1.90px;font-size:13px;line-height:17px;transform:scaleX(0.9367);color:#c6cbd3;">Filter</span>
<span class="t" style="left:22.00px;top:33.39px;font-size:11px;line-height:14px;letter-spacing:-0.011px;">Alle Touren anzeigen</span>
<span class="t" style="left:21.80px;top:51.69px;font-size:11px;line-height:14px;letter-spacing:-0.044px;">Touren mit nicht fertiggemeldeten Aufträgen anzeigen</span>
<span class="t" style="left:21.80px;top:70.49px;font-size:11px;line-height:14px;letter-spacing:-0.043px;">Touren mit fertiggemeldeten Aufträgen anzeigen</span>
<span class="t" style="left:10.40px;top:104.49px;font-size:11px;line-height:14px;letter-spacing:0.017px;">Prod.schl.</span>
<span class="t" style="left:68.65px;top:106.99px;font-size:11px;line-height:14px;letter-spacing:0.200px;">200</span>
<span class="t" style="left:108.65px;top:106.99px;font-size:11px;line-height:14px;transform:scaleX(0.9415);">Heimproduktion POL</span>
<span class="t" style="left:362.91px;top:105.09px;font-size:11px;line-height:14px;transform:scaleX(0.9739);">OK</span>
</div>
</div>
</body>
</html>
